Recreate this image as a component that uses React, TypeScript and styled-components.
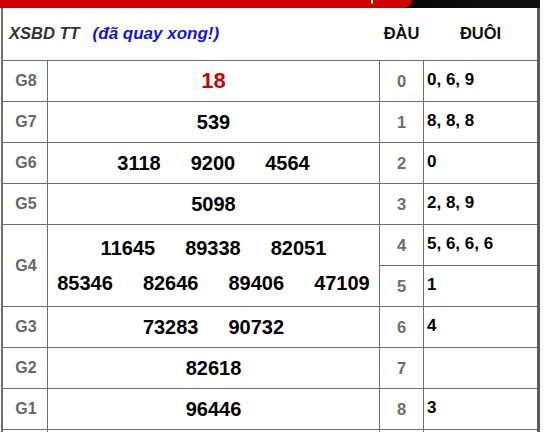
import React from "react";
import styled, { createGlobalStyle } from "styled-components";

const Global = createGlobalStyle`
  html, body { margin: 0; padding: 0; background: #fff; }
  body { font-family: "Liberation Sans", Arial, sans-serif; overflow: hidden; }
`;

const Page = styled.div`
  width: 544px;
`;

const TopBar = styled.div`
  display: flex;
  width: 540px;
  height: 8px;
  background: linear-gradient(to right, #111 0%, #000 60%, #111 100%);
`;

const RedTab = styled.div`
  display: flex;
  width: 412px;
  height: 8px;
  background: #cc0000;
  border-bottom-right-radius: 9px;
  padding-left: 371px;
  box-sizing: border-box;
`;

const Tick = styled.div`
  width: 2px;
  height: 4px;
  background: #fff;
  border-bottom-left-radius: 2px;
`;

const Panel = styled.div`
  margin-left: 1px;
  width: 534px;
  border-left: 2px solid #6e6e6e;
  border-right: 3px solid #5a5a5a;
`;

const cols = "44px 331px 43px 113px";

const Header = styled.div`
  display: grid;
  grid-template-columns: ${cols};
  column-gap: 1px;
  height: 52px;
  border-bottom: 1px solid #6e6e6e;
  align-items: center;
`;

const Title = styled.div`
  grid-column: 1 / span 2;
  padding-left: 6px;
  font-size: 16.5px;
  font-weight: bold;
  font-style: italic;
  color: #333;
  white-space: nowrap;
`;

const Status = styled.span`
  margin-left: 13px;
  font-size: 17px;
  color: #1212e6;
`;

const HeadCell = styled.div`
  text-align: center;
  font-size: 16.5px;
  font-weight: bold;
  color: #111;
  padding-bottom: 2px;
`;

const Body = styled.div`
  display: grid;
  grid-template-columns: ${cols};
  grid-auto-rows: 40px;
  gap: 1px;
  background: #6e6e6e;
`;

const Cell = styled.div<{ $span?: number }>`
  background: #fff;
  display: flex;
  align-items: center;
  ${(p) => (p.$span ? `grid-row: span ${p.$span};` : "")}
`;

const Label = styled(Cell)`
  justify-content: center;
  padding-left: 2px;
  font-size: 16px;
  font-weight: bold;
  color: #676767;
`;

const Numbers = styled(Cell)`
  flex-direction: column;
  justify-content: center;
`;

const NumLine = styled.div<{ $tall?: boolean }>`
  display: flex;
  justify-content: center;
  gap: 30px;
  line-height: ${(p) => (p.$tall ? "35px" : "24px")};
`;

const Num = styled.span<{ $special?: boolean }>`
  font-size: ${(p) => (p.$special ? "22px" : "20px")};
  font-weight: bold;
  color: ${(p) => (p.$special ? "#cc0000" : "#000")};
`;

const Head = styled(Cell)`
  justify-content: center;
  font-size: 16.5px;
  font-weight: bold;
  color: #6d6d6d;
`;

const Tail = styled(Cell)`
  padding-left: 3px;
  padding-bottom: 2px;
  font-size: 17px;
  font-weight: bold;
  color: #000;
`;

type Prize = { label: string; lines: string[][]; special?: boolean };

const prizes: Prize[] = [
  { label: "G8", lines: [["18"]], special: true },
  { label: "G7", lines: [["539"]] },
  { label: "G6", lines: [["3118", "9200", "4564"]] },
  { label: "G5", lines: [["5098"]] },
  { label: "G4", lines: [["11645", "89338", "82051"], ["85346", "82646", "89406", "47109"]] },
  { label: "G3", lines: [["73283", "90732"]] },
  { label: "G2", lines: [["82618"]] },
  { label: "G1", lines: [["96446"]] },
  { label: "", lines: [[]] },
];

const loto: [string, string][] = [
  ["0", "0, 6, 9"],
  ["1", "8, 8, 8"],
  ["2", "0"],
  ["3", "2, 8, 9"],
  ["4", "5, 6, 6, 6"],
  ["5", "1"],
  ["6", "4"],
  ["7", ""],
  ["8", "3"],
  ["", ""],
];

export default function App() {
  let li = 0;
  const cells: React.ReactNode[] = [];
  prizes.forEach((p, i) => {
    const span = p.lines.length;
    cells.push(
      <Label key={`l${i}`} $span={span > 1 ? span : undefined}>
        {p.label}
      </Label>
    );
    cells.push(
      <Numbers key={`n${i}`} $span={span > 1 ? span : undefined}>
        {p.lines.map((line, j) => (
          <NumLine key={j} $tall={span > 1}>
            {line.map((n, k) => (
              <Num key={k} $special={p.special}>
                {n}
              </Num>
            ))}
          </NumLine>
        ))}
      </Numbers>
    );
    for (let s = 0; s < span; s++) {
      const [h, t] = loto[li++];
      cells.push(<Head key={`h${li}`}>{h}</Head>);
      cells.push(<Tail key={`t${li}`}>{t}</Tail>);
    }
  });

  return (
    <Page>
      <Global />
      <TopBar>
        <RedTab>
          <Tick />
        </RedTab>
      </TopBar>
      <Panel>
        <Header>
          <Title>
            XSBD TT<Status>(đã quay xong!)</Status>
          </Title>
          <HeadCell>ĐÀU</HeadCell>
          <HeadCell>ĐUÔI</HeadCell>
        </Header>
        <Body>{cells}</Body>
      </Panel>
    </Page>
  );
}
